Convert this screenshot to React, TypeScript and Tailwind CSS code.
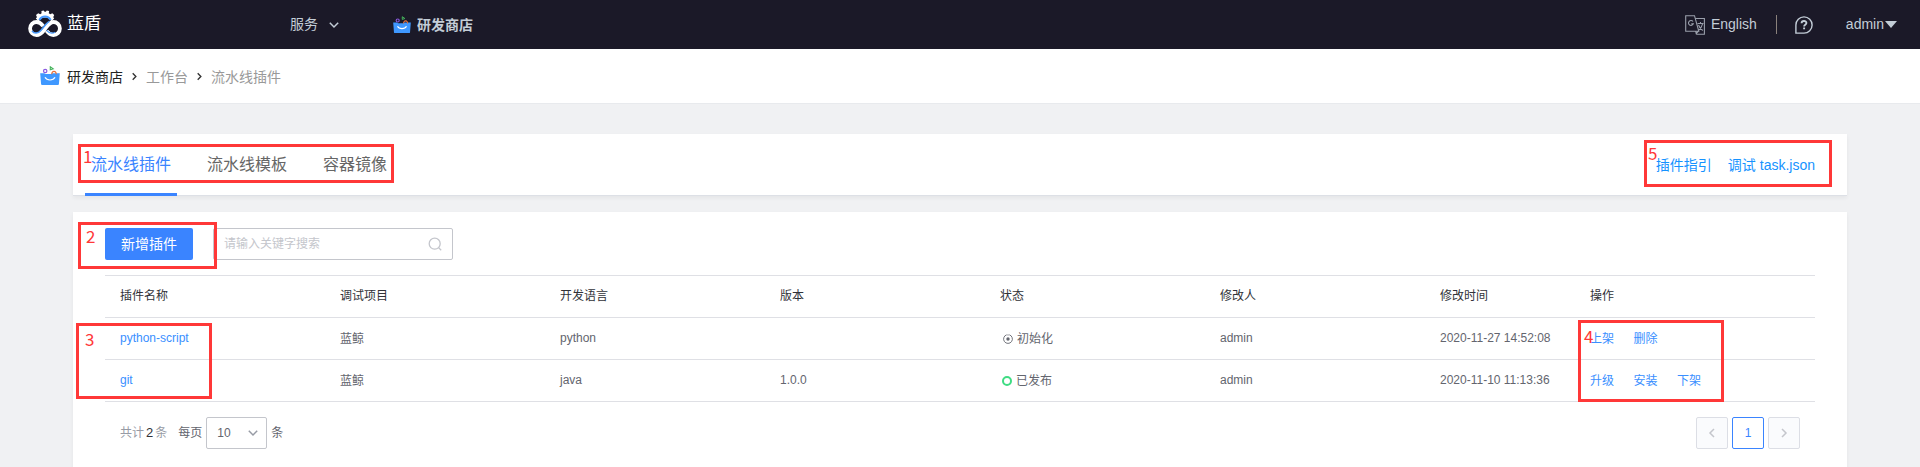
import React from "react";

const font =
  "font-['Liberation_Sans','Noto_Sans_CJK_SC',sans-serif]";

function Logo() {
  return (
    <svg className="block h-[28px] w-[34px]" viewBox="0 0 34 28" fill="none">
      <path
        d="M10 12 7.800 9.200l1.200-1L8 6l2.200-1.800 2 1 1.400-.9-.2-2.200 2.200-.7 1 1.300h1.200l1-1.300 2.300.7-.3 2.200 1.500.9 2-1L26.200 6l-1 2.200 1 1L24 12z"
        fill="#fff"
      />
      <path d="M10.500 14a6.600 6.600 0 0 1 13 0z" fill="#1b1928" />
      <path d="M11.300 11a6.500 6.500 0 0 1 11.400 0" stroke="#4a9cff" strokeWidth="2" />
      <path
        d="M15.200 17.200C13.300 14.700 11.500 13 8.600 13a6.500 6.500 0 0 0 0 13c3.200 0 5.400-2.200 7.900-5.300l1.700-2.300C20.500 15.400 22.400 13 25.400 13a6.500 6.500 0 0 1 0 13c-2.800 0-5-1.900-6.800-4.200"
        stroke="#fff"
        strokeWidth="3.800"
      />
      <path
        d="M4 21.800c2 3.200 6 3 8.800-.3l5.200-6.200c1.200-1.400 2.200-2.300 3.400-2.900"
        stroke="#4a9cff"
        strokeWidth="1.500"
      />
      <path d="M18.600 21.300c3 3.500 6 3.400 8.400 2" stroke="#4a9cff" strokeWidth="1.200" />
    </svg>
  );
}

function StoreIcon({ className }: { className: string }) {
  return (
    <svg className={className} viewBox="0 0 20 20" fill="none">
      <circle cx="5.200" cy="5" r="1.700" stroke="#8b5be0" strokeWidth="1.200" />
      <path d="M10.300 3.800V.8l2.900 2z" stroke="#45b35c" strokeWidth="1.100" />
      <path d="M.2 7.200h4.300l1 .9h5.800l1-.9h7.500l-.9 11a1 1 0 0 1-1 .8H2.100a1 1 0 0 1-1-.8z" fill="#3f98ff" />
      <path d="M11.900 8.300a2.200 2.200 0 1 1 4.200 0" stroke="#e8703a" strokeWidth="1.200" />
      <path d="M5 11.300c1.800 3.600 8.200 3.600 10 0" stroke="#fff" strokeWidth="1.200" />
    </svg>
  );
}

function Chevron({ className, d }: { className: string; d: string }) {
  return (
    <svg className={className} viewBox="0 0 10 10" fill="none" stroke="currentColor" strokeWidth="1.500">
      <path d={d} />
    </svg>
  );
}

const DOWN = "M.8 2.800 5 7l4.200-4.200";
const RIGHT = "M3 1.500 6.500 5 3 8.500";
const LEFT = "M7 1 3 5l4 4";

function Header() {
  return (
    <header className="flex h-[49px] items-center bg-[#1b1928] text-sm text-[#c3cdd7]">
      <div className="flex w-[290px] items-center pb-[3px] pl-[28px]">
        <Logo />
        <span className="ml-[5px] mt-0.5 text-[17px] leading-5 text-white">蓝盾</span>
      </div>
      <div className="flex w-[103px] items-center">
        <span className="-mt-0.5 leading-5">服务</span>
        <Chevron className="ml-[11px] size-[10px]" d={DOWN} />
      </div>
      <div className="flex items-center">
        <StoreIcon className="h-[18px] w-[18px]" />
        <span className="ml-1.5 font-bold leading-5">研发商店</span>
      </div>
      <div className="ml-auto flex items-center">
        <svg className="size-5" viewBox="0 0 20 20" fill="none" stroke="#9a9fab" strokeWidth="1.100">
          <path d="M10.500 16.300H.7V.7h8.800l4.300 15.600H10.500l1.300 3h7.600V3.500h-9.100M10.600 19l3-3" />
          <path d="M8 6.500a2.500 2.500 0 1 0 .3 2.400H6.300M12.500 8.500h6M15.500 7v1.200M17.500 9c-.6 3-2.300 5-4.200 6.500M13.500 10c.8 2.200 2.300 4 4.200 5.500" />
        </svg>
        <span className="-mt-px ml-1.5 leading-5">English</span>
        <span className="ml-[19px] h-[19px] w-px bg-[#8a817c]" />
        <svg className="ml-[18px] size-[18px]" viewBox="0 0 18 18" fill="none" stroke="currentColor" strokeWidth="1.400">
          <path d="M.9 17.100V9A8.100 8.100 0 1 1 9 17.100z" />
          <path d="M6.600 7.300c0-3 4.800-2.900 4.800-.2 0 1.700-2.300 1.700-2.300 3.300M9.100 11.600v1.700" strokeWidth="1.900" />
        </svg>
        <span className="-mt-px ml-[33px] leading-5">admin</span>
        <svg className="ml-px mr-[23px] h-[7px] w-[12px]" viewBox="0 0 12 7">
          <path d="M0 0h12L6 7z" fill="currentColor" />
        </svg>
      </div>
    </header>
  );
}

function Breadcrumb() {
  return (
    <nav className="flex h-[55px] items-center border-b border-[#e8eaed] bg-white pl-10 pt-px text-sm leading-5 text-[#999]">
      <StoreIcon className="-mt-px size-5" />
      <span className="ml-[7px] text-[#222]">研发商店</span>
      <Chevron className="mx-[7px] size-[9px] text-[#333]" d={RIGHT} />
      <span>工作台</span>
      <Chevron className="mx-[7px] size-[9px] text-[#333]" d={RIGHT} />
      <span>流水线插件</span>
    </nav>
  );
}

const tabs = ["流水线插件", "流水线模板", "容器镜像"];

function TabCard() {
  return (
    <section className="flex h-[62px] items-stretch justify-between border-b border-[#dde0e6] bg-white pl-3 pr-8 shadow-[0_2px_4px_rgba(0,0,0,0.05)]">
      <div className="flex gap-6">
        {tabs.map((tab, i) => (
          <div
            key={tab}
            className={
              i === 0
                ? "-mb-px border-b-[3px] border-[#3a84ff] px-1.5 text-base leading-[61px] text-[#3a84ff]"
                : "px-1.5 text-base leading-[61px] text-[#666]"
            }
          >
            {tab}
          </div>
        ))}
      </div>
      <div className="flex gap-4 text-sm leading-[62px] text-[#1592ff]">
        <span>插件指引</span>
        <span>调试 task.json</span>
      </div>
    </section>
  );
}

const grid = "grid h-[42px] grid-cols-[220px_220px_220px_220px_220px_220px_150px_240px] items-center border-b border-[#dfe0e5] text-xs";
const headers = ["插件名称", "调试项目", "开发语言", "版本", "状态", "修改人", "修改时间", "操作"];
const rows = [
  { name: "python-script", lang: "python", version: "", status: "初始化", time: "2020-11-27 14:52:08", ops: ["上架", "删除"] },
  { name: "git", lang: "java", version: "1.0.0", status: "已发布", time: "2020-11-10 11:13:36", ops: ["升级", "安装", "下架"] },
];

function Status({ text }: { text: string }) {
  return (
    <div className="flex items-center leading-5">
      {text === "已发布" ? (
        <span className="ml-[17px] mr-1 size-[10px] rounded-full border-2 border-[#3fdc83]" />
      ) : (
        <svg className="ml-[18px] mr-1 size-[10px]" viewBox="0 0 10 10" fill="none" stroke="#63656e">
          <path d="M3.700.8a4.400 4.400 0 1 0 2.600 0" strokeWidth=".9" />
          <circle cx="5" cy="5" r="1.700" fill="#63656e" stroke="none" />
          <path d="M5 .2v1.500" strokeWidth=".8" />
        </svg>
      )}
      <span>{text}</span>
    </div>
  );
}

function PluginTable() {
  return (
    <div className="mt-[15px] border-t border-[#dfe0e5]">
      <div className={`${grid} text-[#313238]`}>
        {headers.map((h) => (
          <span key={h} className="pb-0.5 pl-[15px] leading-5">{h}</span>
        ))}
      </div>
      {rows.map((r) => (
        <div key={r.name} className={`${grid} text-[#63656e]`}>
          <span className="pb-0.5 pl-[15px] leading-5 text-[#3a8fff]">{r.name}</span>
          <span className="pl-[15px] leading-5">蓝鲸</span>
          <span className="pb-0.5 pl-[15px] leading-5">{r.lang}</span>
          <span className="pb-0.5 pl-[15px] leading-5">{r.version}</span>
          <Status text={r.status} />
          <span className="pb-0.5 pl-[15px] leading-5">admin</span>
          <span className="whitespace-nowrap pb-0.5 pl-[15px] leading-5">{r.time}</span>
          <div className="flex gap-[19.500px] pl-[15px] leading-5 text-[#3a8fff]">
            {r.ops.map((o) => (
              <span key={o}>{o}</span>
            ))}
          </div>
        </div>
      ))}
    </div>
  );
}

function Pagination() {
  return (
    <div className="mt-[15px] flex h-8 items-center px-[15px] text-xs text-[#63656e]">
      <span className="text-[#979ba5]">共计</span>
      <span className="mx-[2px] text-[13px] text-[#313238]">2</span>
      <span className="text-[#979ba5]">条</span>
      <span className="ml-[11px]">每页</span>
      <div className="ml-1 flex h-8 w-[61px] items-center justify-between rounded-[2px] border border-[#c4c6cc] pl-[10px] pr-2">
        <span>10</span>
        <Chevron className="size-[10px] text-[#979ba5]" d={DOWN} />
      </div>
      <span className="ml-1">条</span>
      <div className="ml-auto flex gap-1">
        <span className="flex size-8 items-center justify-center rounded-[2px] border border-[#dcdee5] bg-[#fafbfd] text-[#c4c6cc]">
          <Chevron className="size-[10px]" d={LEFT} />
        </span>
        <span className="flex size-8 items-center justify-center rounded-[2px] border border-[#3a84ff] text-[#3a84ff]">1</span>
        <span className="flex size-8 items-center justify-center rounded-[2px] border border-[#dcdee5] bg-[#fafbfd] text-[#c4c6cc]">
          <Chevron className="size-[10px]" d="M3 1 7 5 3 9" />
        </span>
      </div>
    </div>
  );
}

const marks = [
  { n: 1, box: "left-[78px] top-[144px] w-[316px] h-[39px]", num: "left-[83px] top-[146px]" },
  { n: 2, box: "left-[78px] top-[222px] w-[139px] h-[47px]", num: "left-[86px] top-[226px]" },
  { n: 3, box: "left-[76px] top-[323px] w-[136px] h-[76px]", num: "left-[85px] top-[329px]" },
  { n: 4, box: "left-[1578px] top-[320px] w-[146px] h-[82px]", num: "left-[1584px] top-[326px]" },
  { n: 5, box: "left-[1644px] top-[140px] w-[188px] h-[47px]", num: "left-[1648px] top-[143px]" },
];

export default function App() {
  return (
    <div className={`relative h-[467px] w-[1920px] overflow-hidden bg-[#f0f1f3] ${font}`}>
      <Header />
      <Breadcrumb />
      <main className="px-[73px] pt-[30px]">
        <TabCard />
        <section className="mt-4 h-[300px] bg-white px-8 pt-4 shadow-[0_2px_4px_rgba(0,0,0,0.05)]">
          <div className="flex gap-5">
            <button className="h-8 w-[88px] rounded-[2px] bg-[#3a84ff] text-sm text-white">新增插件</button>
            <div className="flex h-8 w-60 items-center justify-between rounded-[2px] border border-[#c4c6cc] pl-[10px] pr-[10px] text-xs text-[#c4c6cc]">
              <span>请输入关键字搜索</span>
              <svg className="size-[14px]" viewBox="0 0 14 14" fill="none" stroke="currentColor" strokeWidth="1.300">
                <circle cx="6.700" cy="6.700" r="5.500" />
                <path d="m10.700 10.700 2.500 2.500" />
              </svg>
            </div>
          </div>
          <PluginTable />
          <Pagination />
        </section>
      </main>
      {marks.map((m) => (
        <React.Fragment key={m.n}>
          <div className={`absolute border-[3px] border-[#ff3838] ${m.box}`} />
          <span className={`absolute font-['Noto_Sans_CJK_SC',sans-serif] text-[17px] leading-5 text-[#ff3838] ${m.num}`}>{m.n}</span>
        </React.Fragment>
      ))}
    </div>
  );
}
